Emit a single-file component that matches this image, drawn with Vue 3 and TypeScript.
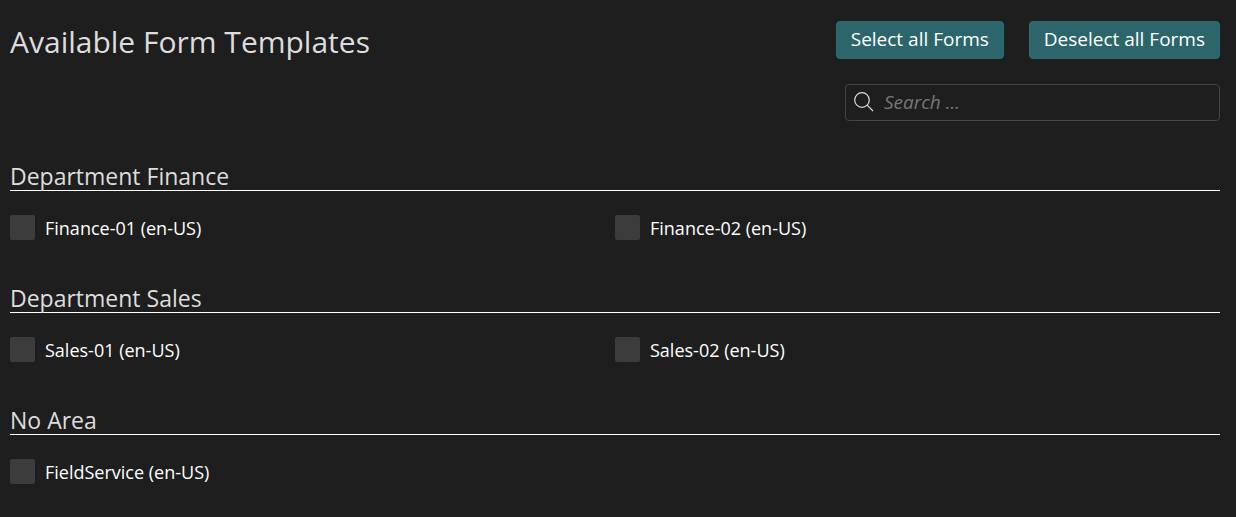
<script setup lang="ts">
import { computed, ref } from 'vue'

interface Area {
  name: string
  forms: string[]
}

const areas: Area[] = [
  { name: 'Department Finance', forms: ['Finance-01 (en-US)', 'Finance-02 (en-US)'] },
  { name: 'Department Sales', forms: ['Sales-01 (en-US)', 'Sales-02 (en-US)'] },
  { name: 'No Area', forms: ['FieldService (en-US)'] },
]

const query = ref('')
const selected = ref<string[]>([])

const visibleAreas = computed(() =>
  areas
    .map((area) => ({
      name: area.name,
      forms: area.forms.filter((form) => form.toLowerCase().includes(query.value.toLowerCase())),
    }))
    .filter((area) => area.forms.length > 0),
)

function selectAll() {
  selected.value = areas.flatMap((area) => area.forms)
}

function deselectAll() {
  selected.value = []
}
</script>

<template>
  <main class="page">
    <header class="header">
      <h1 class="title">Available Form Templates</h1>
      <div class="actions">
        <button type="button" class="button" @click="selectAll">Select all Forms</button>
        <button type="button" class="button" @click="deselectAll">Deselect all Forms</button>
      </div>
    </header>

    <label class="search">
      <svg class="search-icon" viewBox="0 0 20 20" width="20" height="20" aria-hidden="true">
        <circle cx="8" cy="8" r="7.3" />
        <path d="M13.2 13.2L19 19" />
      </svg>
      <input v-model="query" class="search-input" type="text" placeholder="Search ..." aria-label="Search" />
    </label>

    <section v-for="area in visibleAreas" :key="area.name" class="area">
      <h2 class="area-title">{{ area.name }}</h2>
      <div class="forms">
        <label v-for="form in area.forms" :key="form" class="form">
          <input v-model="selected" class="checkbox" type="checkbox" :value="form" />
          <span>{{ form }}</span>
        </label>
      </div>
    </section>
  </main>
</template>

<style>
body {
  background: #1e1e1e;
}
</style>

<style scoped>
.page {
  padding: 21px 16px 32px 10px;
  color: #fff;
  font-family: 'Open Sans', 'Noto Sans', sans-serif;
  font-size: 18px;
}

.header {
  display: flex;
  justify-content: space-between;
  align-items: flex-start;
}

.title {
  margin: 0;
  color: #ddd;
  font-size: 30px;
  font-weight: 400;
  line-height: 42px;
}

.actions {
  display: flex;
  gap: 25px;
}

.button {
  height: 38px;
  padding: 0 14px 2px;
  border: 1px solid #306d72;
  border-radius: 4px;
  background: #2c666b;
  color: #fff;
  font-family: inherit;
  font-size: 19px;
}

.search {
  display: flex;
  align-items: center;
  gap: 10px;
  box-sizing: border-box;
  width: 31%;
  height: 37px;
  margin: 21px 0 0 auto;
  padding: 0 8px 2px;
  border: 1px solid #444;
  border-radius: 4px;
}

.search-icon {
  flex: none;
  fill: none;
  stroke: #ddd;
  stroke-width: 1.2;
}

.search-input {
  flex: 1;
  min-width: 0;
  padding: 0;
  border: 0;
  outline: 0;
  background: transparent;
  color: #fff;
  font-family: inherit;
  font-size: 19px;
}

.search-input::placeholder {
  color: #777;
  font-style: italic;
  opacity: 1;
}

.area {
  margin-top: 41px;
}

.area-title {
  margin: 0;
  border-bottom: 1px solid #fff;
  color: #ddd;
  font-size: 23px;
  font-weight: 400;
  line-height: 28px;
}

.forms {
  display: grid;
  grid-template-columns: 1fr 1fr;
  padding: 24px 0 2px;
}

.form {
  display: flex;
  align-items: flex-start;
  gap: 10px;
  line-height: 26px;
}

.checkbox {
  flex: none;
  appearance: none;
  width: 25px;
  height: 25px;
  margin: 0;
  border-radius: 2px;
  background: #3c3c3c;
}

.checkbox:checked {
  background: #2c666b;
}
</style>
